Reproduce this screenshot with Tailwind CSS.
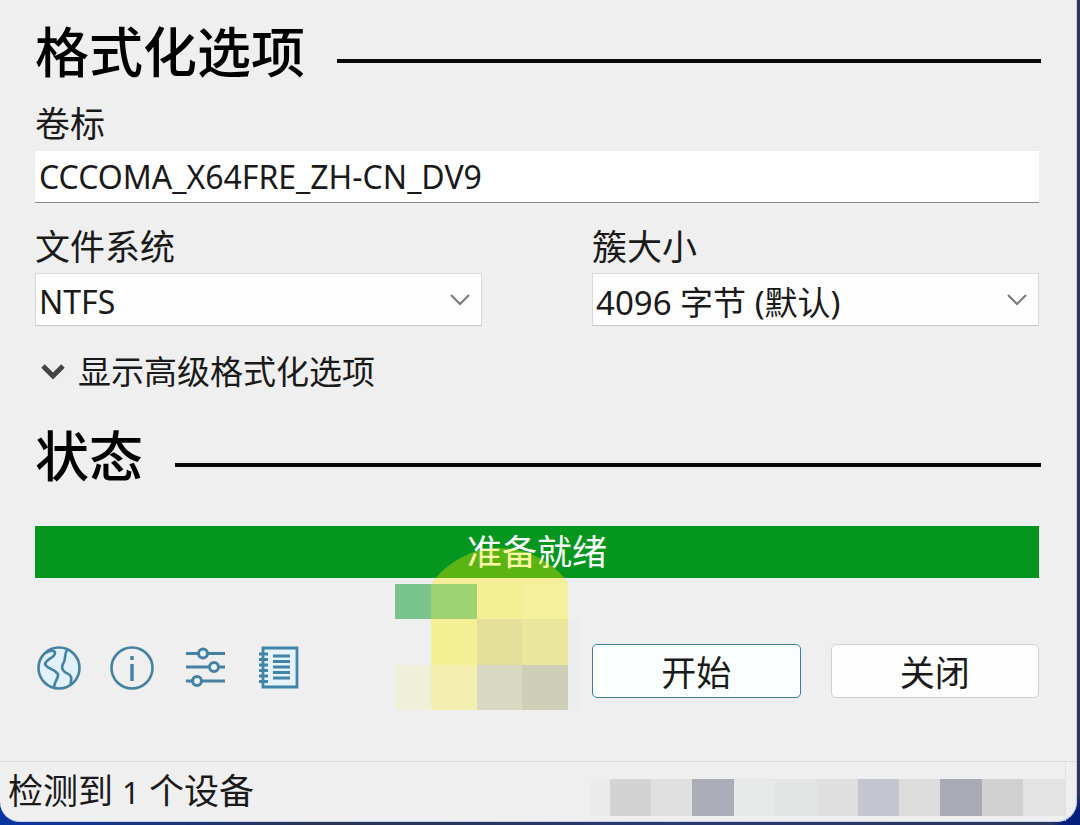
<!DOCTYPE html>
<html lang="zh-CN">
<head>
  <meta charset="UTF-8" />
  <meta name="viewport" content="width=device-width, initial-scale=1.0"/>
  <title>格式化选项</title>
  <script src="https://cdn.jsdelivr.net/npm/@tailwindcss/browser@4"></script>
</head>
<body class="min-h-screen flex flex-col pr-[3px] pb-[3px] bg-[radial-gradient(circle_at_bottom_right,#04207c_0px,#04207c_16px,transparent_30px),linear-gradient(to_right,#0a35a0,#2c3350_30%,#2a3a70_60%,#30365a)] font-['Noto_Sans','Noto_Sans_CJK_SC',sans-serif] text-[#1a1a1a]">
  <div class="relative flex-1 flex flex-col bg-[#efefef] rounded-b-[20px] border-r border-b border-[#c3d0f0]">
    <main class="flex-1 pl-[35px] pr-[37px] pt-5">

      <!-- 格式化选项 -->
      <div class="flex items-center gap-8 -mr-0.5">
        <h1 class="text-[54px] leading-[64px] font-medium text-black">格式化选项</h1>
        <div class="flex-1 h-1 mt-[18px] bg-[#0a0a0a]"></div>
      </div>

      <label for="volume" class="block mt-4 text-[35px] leading-[48px]">卷标</label>
      <input id="volume" type="text" value="CCCOMA_X64FRE_ZH-CN_DV9"
        class="block w-full h-[52px] mt-[3px] px-1 bg-white border-b border-[#8a8a8a] text-[32px] focus:outline-none">

      <div class="grid grid-cols-2 gap-x-[110px] mt-5">
        <div>
          <label for="fs" class="block text-[35px] leading-[48px]">文件系统</label>
          <div class="relative mt-0.5">
            <select id="fs" class="block w-full h-[53px] appearance-none bg-[#fdfdfd] border border-[#d9d9d9] border-b-[#c8c8c8] px-[3px] pt-1 text-[32px]">
              <option>NTFS</option>
              <option>FAT32</option>
            </select>
            <svg class="absolute right-3 top-[19px] w-5 h-4 pointer-events-none" viewBox="0 0 20 16" fill="none" stroke="#777" stroke-width="2"><path d="M1 3l9 9 9-9"/></svg>
          </div>
        </div>
        <div>
          <label for="cluster" class="block text-[35px] leading-[48px]">簇大小</label>
          <div class="relative mt-0.5">
            <select id="cluster" class="block w-full h-[53px] appearance-none bg-[#fdfdfd] border border-[#d9d9d9] border-b-[#c8c8c8] px-[3px] pt-1 text-[33px]">
              <option>4096 字节 (默认)</option>
              <option>8192 字节</option>
            </select>
            <svg class="absolute right-3 top-[19px] w-5 h-4 pointer-events-none" viewBox="0 0 20 16" fill="none" stroke="#777" stroke-width="2"><path d="M1 3l9 9 9-9"/></svg>
          </div>
        </div>
      </div>

      <button type="button" class="flex items-center gap-3 mt-[22px] pl-[5px] text-[33px] leading-[48px]">
        <svg class="w-[26px] h-5" viewBox="0 0 26 20" fill="none" stroke="#444" stroke-width="5"><path d="M3 4l10 10L23 4"/></svg>
        显示高级格式化选项
      </button>

      <!-- 状态 -->
      <div class="flex items-center gap-8 mt-7 -mr-0.5">
        <h1 class="text-[54px] leading-[64px] font-medium text-black">状态</h1>
        <div class="flex-1 h-1 mt-[18px] bg-[#0a0a0a]"></div>
      </div>

      <div class="relative h-[52px] mt-[38px] bg-[#04961f] text-white text-[35px] leading-[52px] text-center" role="status">
        准备就绪
        <!-- 点击光圈 -->
        <div class="absolute left-[397px] top-[22px] w-[136px] h-9 overflow-hidden">
          <div class="w-[168px] h-[168px] -ml-4 rounded-full bg-[#ffee00]/35"></div>
        </div>
        <!-- 马赛克 -->
        <div class="absolute left-[360px] top-[58px] grid grid-cols-[36px_46px_45px_46px_12px] grid-rows-[35px_46px_45px]">
          <i class="bg-[#79c48c]"></i><i class="bg-[#9fd271]"></i><i class="bg-[#f4ee94]"></i><i class="bg-[#f4f09c]"></i><i></i>
          <i></i><i class="bg-[#f4ee94]"></i><i class="bg-[#e4df9b]"></i><i class="bg-[#eae79c]"></i><i class="bg-[#ecedef]"></i>
          <i class="bg-[#f0f0da]"></i><i class="bg-[#f3efb1]"></i><i class="bg-[#d9d9c3]"></i><i class="bg-[#cfceb6]"></i><i class="bg-[#ebedef]"></i>
        </div>
      </div>

      <div class="grid grid-cols-2 gap-x-[110px] mt-[66px]">
        <div class="flex items-center gap-[29px] pl-0.5 -mt-1.5">
          <button type="button" aria-label="语言" class="w-11 h-11">
            <svg viewBox="0 0 44 44" fill="none" stroke="#4682a0" stroke-width="2.6" stroke-linejoin="round">
              <circle cx="22" cy="22" r="20.5" fill="#e0f1fa"/>
              <path d="M9 7C13 4 18 4 18 7C18 12 10 12 8 18C10 23 18 23 21 28C22 32 17 36 17 41"/>
              <path d="M30 4C27 8 29 12 27 16C25 19 24 21 26 24C28 28 33 27 34 31C35 34 33 36 34 39"/>
            </svg>
          </button>
          <button type="button" aria-label="关于" class="w-11 h-11">
            <svg viewBox="0 0 44 44" fill="none" stroke="#4682a0" stroke-width="2.6">
              <circle cx="22" cy="22" r="20.5"/>
              <path stroke-width="3.4" d="M22 18v17M22 10v4"/>
            </svg>
          </button>
          <button type="button" aria-label="设置" class="w-11 h-11">
            <svg viewBox="0 0 44 44" fill="#e4f5fd" stroke="#4682a0" stroke-width="3">
              <path d="M3 7.500h39M3 21h39M3 35h39"/>
              <circle cx="20" cy="7.500" r="4.500"/>
              <circle cx="31" cy="21" r="4.500"/>
              <circle cx="14" cy="35" r="4.500"/>
            </svg>
          </button>
          <button type="button" aria-label="日志" class="w-11 h-11">
            <svg viewBox="0 0 44 44" fill="none" stroke="#4284a8" stroke-width="2.8">
              <path fill="#e6f3fa" d="M7 2h34v39H7z"/>
              <path d="M3 8h9M3 13.500h9M3 19h9M3 24.500h9M3 30h9M3 35.500h9"/>
              <path d="M17 10h17M17 15.500h17M17 21h17M17 26.500h17M17 32h17"/>
            </svg>
          </button>
        </div>
        <div class="grid grid-cols-2 gap-[30px] text-[35px] leading-[52px]">
          <button type="button" class="h-[54px] pt-0.5 bg-[#fbfefe] border border-[#3d7ea0] rounded-[5px]">开始</button>
          <button type="button" class="h-[54px] pt-0.5 bg-[#fdfdfd] border border-[#d0d0d0] rounded-[5px]">关闭</button>
        </div>
      </div>
    </main>

    <!-- 状态栏 -->
    <footer class="flex justify-between h-[60px] pl-2 pr-[10px] border-t border-[#dcdcdc]">
      <span class="text-[35px] leading-[58px]">检测到 <span class="text-[31px]">1</span> 个设备</span>
      <div class="pt-[17px] border-r border-[#e0e0e0]">
        <div class="flex h-[37px]">
          <i class="w-[19px] bg-[#ebebeb]"></i>
          <i class="w-[41px] bg-[#d3d3d3]"></i>
          <i class="w-[41px] bg-[#e0e0e0]"></i>
          <i class="w-[42px] bg-[#abadb9]"></i>
          <i class="w-[41px] bg-[#e7e9e8]"></i>
          <i class="w-[42px] bg-[#e3e5e4]"></i>
          <i class="w-[41px] bg-[#dfdfdf]"></i>
          <i class="w-[41px] bg-[#c3c5cf]"></i>
          <i class="w-[41px] bg-[#dcdcdc]"></i>
          <i class="w-[42px] bg-[#a8aab5]"></i>
          <i class="w-[41px] bg-[#d0d0d0]"></i>
          <i class="w-[42px] bg-[#e3e3e3]"></i>
        </div>
      </div>
    </footer>
  </div>
</body>
</html>
